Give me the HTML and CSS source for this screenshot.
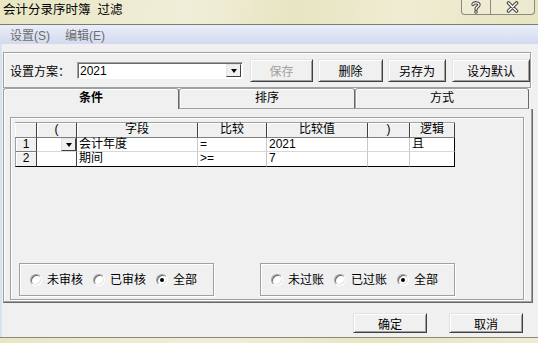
FILE: index.html
```html
<!DOCTYPE html>
<html lang="zh-CN">
<head>
  <meta charset="UTF-8">
  <title>会计分录序时簿 过滤</title>
  <link rel="stylesheet" href="styles.css">
</head>
<body>
  <div class="window">
    <div class="titlebar">
      <span class="title">会计分录序时簿&nbsp; 过滤</span>
      <div class="caption-btns">
        <span class="cap-btn help">
          <svg width="28" height="14" viewBox="0 0 28 14">
            <path d="M11 4.6 C11 2.2 17 2.2 17 4.8 C17 7 14 6.6 14 9.2" fill="none" stroke="#4a4a4a" stroke-width="3.4" stroke-linecap="round"/>
            <circle cx="14" cy="12" r="1.8" fill="#4a4a4a"/>
            <path d="M11 4.6 C11 2.2 17 2.2 17 4.8 C17 7 14 6.6 14 9.2" fill="none" stroke="#fff" stroke-width="1.3" stroke-linecap="round"/>
            <circle cx="14" cy="12" r="0.8" fill="#fff"/>
          </svg>
        </span>
        <span class="cap-btn close">
          <svg width="43" height="14" viewBox="0 0 43 14">
            <path d="M17.5 3 L25.5 11 M25.5 3 L17.5 11" stroke="#4a4a4a" stroke-width="3.6" stroke-linecap="round"/>
            <path d="M17.5 3 L25.5 11 M25.5 3 L17.5 11" stroke="#fff" stroke-width="1.4" stroke-linecap="round"/>
          </svg>
        </span>
      </div>
    </div>

    <div class="menubar">
      <span class="menu-item">设置(S)</span>
      <span class="menu-item">编辑(E)</span>
    </div>

    <div class="dialog">
      <div class="scheme-box">
        <span class="scheme-label">设置方案：</span>
        <div class="combo">
          <span class="combo-text">2021</span>
          <span class="combo-btn"><i class="arrow"></i></span>
        </div>
        <button class="btn btn-save" disabled>保存</button>
        <button class="btn btn-delete">删除</button>
        <button class="btn btn-saveas">另存为</button>
        <button class="btn btn-default">设为默认</button>
      </div>

      <div class="tabs">
        <div class="tab active">条件</div>
        <div class="tab">排序</div>
        <div class="tab last">方式</div>
      </div>

      <div class="tab-panel">
        <div class="inner-frame">
          <div class="grid">
            <div class="hd"></div>
            <div class="hd">(</div>
            <div class="hd">字段</div>
            <div class="hd">比较</div>
            <div class="hd">比较值</div>
            <div class="hd">)</div>
            <div class="hd">逻辑</div>

            <div class="hd row-hd">1</div>
            <div class="cell paren"><span class="cell-drop"><i class="arrow"></i></span></div>
            <div class="cell">会计年度</div>
            <div class="cell">=</div>
            <div class="cell">2021</div>
            <div class="cell"></div>
            <div class="cell last-col">且</div>

            <div class="hd row-hd last-row">2</div>
            <div class="cell paren last-row"></div>
            <div class="cell last-row">期间</div>
            <div class="cell last-row">&gt;=</div>
            <div class="cell last-row">7</div>
            <div class="cell last-row"></div>
            <div class="cell last-col last-row"></div>
          </div>

          <div class="radio-row">
            <div class="radio-group">
              <span class="radio"></span><span class="radio-label">未审核</span>
              <span class="radio"></span><span class="radio-label">已审核</span>
              <span class="radio checked"></span><span class="radio-label">全部</span>
            </div>
            <div class="radio-group">
              <span class="radio"></span><span class="radio-label">未过账</span>
              <span class="radio"></span><span class="radio-label">已过账</span>
              <span class="radio checked"></span><span class="radio-label">全部</span>
            </div>
          </div>
        </div>
      </div>

      <div class="footer-btns">
        <button class="btn btn-ok">确定</button>
        <button class="btn btn-cancel">取消</button>
      </div>
    </div>

    <div class="bottom-frame"></div>
  </div>
</body>
</html>
```

FILE: styles.css
```css
body {
  margin: 0;
  font-family: "Liberation Sans", "Noto Sans CJK SC", sans-serif;
  font-size: 12px;
  color: #000;
}

.window {
  width: 538px;
  height: 343px;
  display: flex;
  flex-direction: column;
  overflow: hidden;
}

/* title bar */
.titlebar {
  height: 24px;
  border-bottom: 1px solid #7d7d72;
  background: linear-gradient(100deg, #e9e6c4 0%, #f0eed8 35%, #e8e5c2 55%, #efecd3 75%, #e7e4c0 100%);
  display: flex;
  align-items: flex-start;
}

.title {
  padding: 3px 0 0 3px;
  font-size: 12.5px;
  line-height: 14px;
}

.caption-btns {
  margin-left: auto;
  margin-right: 3px;
  display: flex;
  height: 14px;
  border: 1px solid #8a8a80;
  border-top: none;
  border-radius: 0 0 4px 4px;
  background: rgba(255, 255, 255, 0.2);
}

.cap-btn {
  display: flex;
  align-items: center;
  justify-content: center;
}

.help {
  width: 28px;
  border-right: 1px solid #8a8a80;
}

.close {
  width: 43px;
}

/* menu bar */
.menubar {
  height: 19px;
  background: linear-gradient(#e9eef9, #d3daef);
  display: flex;
  align-items: center;
  padding-left: 10px;
  gap: 15px;
  color: #6d6d6d;
}

/* dialog body */
.dialog {
  flex: 1;
  background: #f0f0f0;
  border-left: 2px solid #d8e2f1;
  padding: 8px 0 0 1px;
  display: flex;
  flex-direction: column;
}

.scheme-box {
  width: 528px;
  height: 36px;
  box-sizing: border-box;
  border: 1px solid #a0a0a0;
  box-shadow: inset 1px 1px #fff, 1px 1px #fff;
  display: flex;
  align-items: center;
  padding: 1px 0 0 6px;
}

.scheme-label {
  width: 67px;
}

.combo {
  width: 166px;
  height: 17px;
  box-sizing: border-box;
  background: #fff;
  border: 1px solid;
  border-color: #a0a0a0 #fff #fff #a0a0a0;
  box-shadow: inset 1px 1px #696969;
  display: flex;
  align-items: center;
}

.combo-text {
  padding-left: 2px;
  line-height: 14px;
}

.combo-btn {
  margin-left: auto;
  width: 15px;
  height: 13px;
  box-sizing: border-box;
  margin-right: 1px;
  background: #f0f0f0;
  border: 1px solid;
  border-color: #e3e3e3 #404040 #404040 #e3e3e3;
  display: flex;
  align-items: center;
  justify-content: center;
}

.arrow {
  display: block;
  width: 0;
  height: 0;
  border-left: 3.5px solid transparent;
  border-right: 3.5px solid transparent;
  border-top: 4px solid #000;
}

.btn {
  height: 23px;
  box-sizing: border-box;
  padding: 0;
  background: #f0f0f0;
  border: 1px solid;
  border-color: #e3e3e3 #404040 #404040 #e3e3e3;
  box-shadow: inset 1px 1px #fff, inset -1px -1px #a0a0a0;
  font-family: inherit;
  font-size: 12px;
  color: #000;
}

.btn:disabled {
  color: #a0a0a0;
}

.btn-save {
  width: 63px;
  margin-left: 7px;
}

.btn-delete {
  width: 65px;
  margin-left: 5px;
}

.btn-saveas {
  width: 58px;
  margin-left: 5px;
}

.btn-default {
  width: 78px;
  margin-left: 6px;
}

/* tabs */
.tabs {
  display: flex;
  height: 21px;
}

.tab {
  width: 176px;
  box-sizing: border-box;
  border: 1px solid #a0a0a0;
  border-right-color: #696969;
  border-radius: 3px 3px 0 0;
  box-shadow: inset 1px 1px #fff;
  text-align: center;
  line-height: 19px;
}

.tab.active {
  border-bottom: none;
  font-weight: bold;
}

.tab.last {
  width: 174px;
}

.tab-panel {
  width: 530px;
  height: 194px;
  box-sizing: border-box;
  border-left: 1px solid #a0a0a0;
  border-right: 1px solid #696969;
  border-bottom: 1px solid #696969;
  box-shadow: inset -1px -1px #a0a0a0, inset 1px 0 #fff;
  padding: 8px 8px 2px 6px;
  display: flex;
}

.inner-frame {
  flex: 1;
  box-sizing: border-box;
  border: 1px solid #a0a0a0;
  box-shadow: inset 1px 1px #fff, 1px 1px #fff;
  padding: 4px 4px 3px 4px;
  display: flex;
  flex-direction: column;
  justify-content: space-between;
}

/* condition grid */
.grid {
  display: grid;
  grid-template-columns: 22px 40px 121px 69px 101px 42px 45px;
  grid-template-rows: 15px 14px 15px;
  width: max-content;
  border-top: 1px solid #a0a0a0;
}

.hd {
  box-sizing: border-box;
  background: #f0f0f0;
  border-right: 1px solid #404040;
  border-bottom: 1px solid #808080;
  box-shadow: inset 1px 1px #fff;
  text-align: center;
  line-height: 13px;
}

.row-hd {
  border-left: 1px solid #a0a0a0;
}

.cell {
  box-sizing: border-box;
  background: #fff;
  border-right: 1px solid #c8c8c8;
  border-bottom: 1px solid #d8d8d8;
  padding-left: 2px;
  line-height: 13px;
  white-space: nowrap;
}

.cell.paren {
  border-right-color: #404040;
  display: flex;
  justify-content: flex-end;
  padding-left: 0;
}

.cell.last-col {
  border-right: 1px solid #000;
}

.cell.last-row,
.hd.last-row {
  border-bottom: 1px solid #000;
}

.cell-drop {
  width: 15px;
  height: 13px;
  box-sizing: border-box;
  background: #f0f0f0;
  border: 1px solid;
  border-color: #e3e3e3 #404040 #404040 #e3e3e3;
  display: flex;
  align-items: center;
  justify-content: center;
}

/* radio groups */
.radio-row {
  display: flex;
  gap: 46px;
  margin-left: 4px;
}

.radio-group {
  width: 195px;
  height: 33px;
  box-sizing: border-box;
  border: 1px solid #a0a0a0;
  box-shadow: inset 1px 1px #fff, 1px 1px #fff;
  display: flex;
  align-items: center;
  padding: 1px 0 0 10px;
}

.radio {
  width: 12px;
  height: 12px;
  box-sizing: border-box;
  border-radius: 50%;
  background: #fff;
  border: 1px solid;
  border-color: #a0a0a0 #fff #fff #a0a0a0;
  box-shadow: inset 1px 1px #696969, inset -1px -1px #e3e3e3;
  margin-right: 5px;
  display: flex;
  align-items: center;
  justify-content: center;
}

.radio.checked::after {
  content: "";
  width: 4px;
  height: 4px;
  border-radius: 50%;
  background: #000;
}

.radio-label {
  margin-right: 10px;
  line-height: 14px;
}

/* bottom buttons */
.footer-btns {
  display: flex;
  justify-content: flex-end;
  gap: 22px;
  margin: 10px 15px 0 0;
}

.footer-btns .btn {
  width: 74px;
  height: 20px;
}

.bottom-frame {
  height: 5px;
  border-top: 1px solid #8a8a7c;
  background: linear-gradient(100deg, #e9e6c4 0%, #f0eed8 40%, #e8e5c2 70%, #efecd3 100%);
}
```
